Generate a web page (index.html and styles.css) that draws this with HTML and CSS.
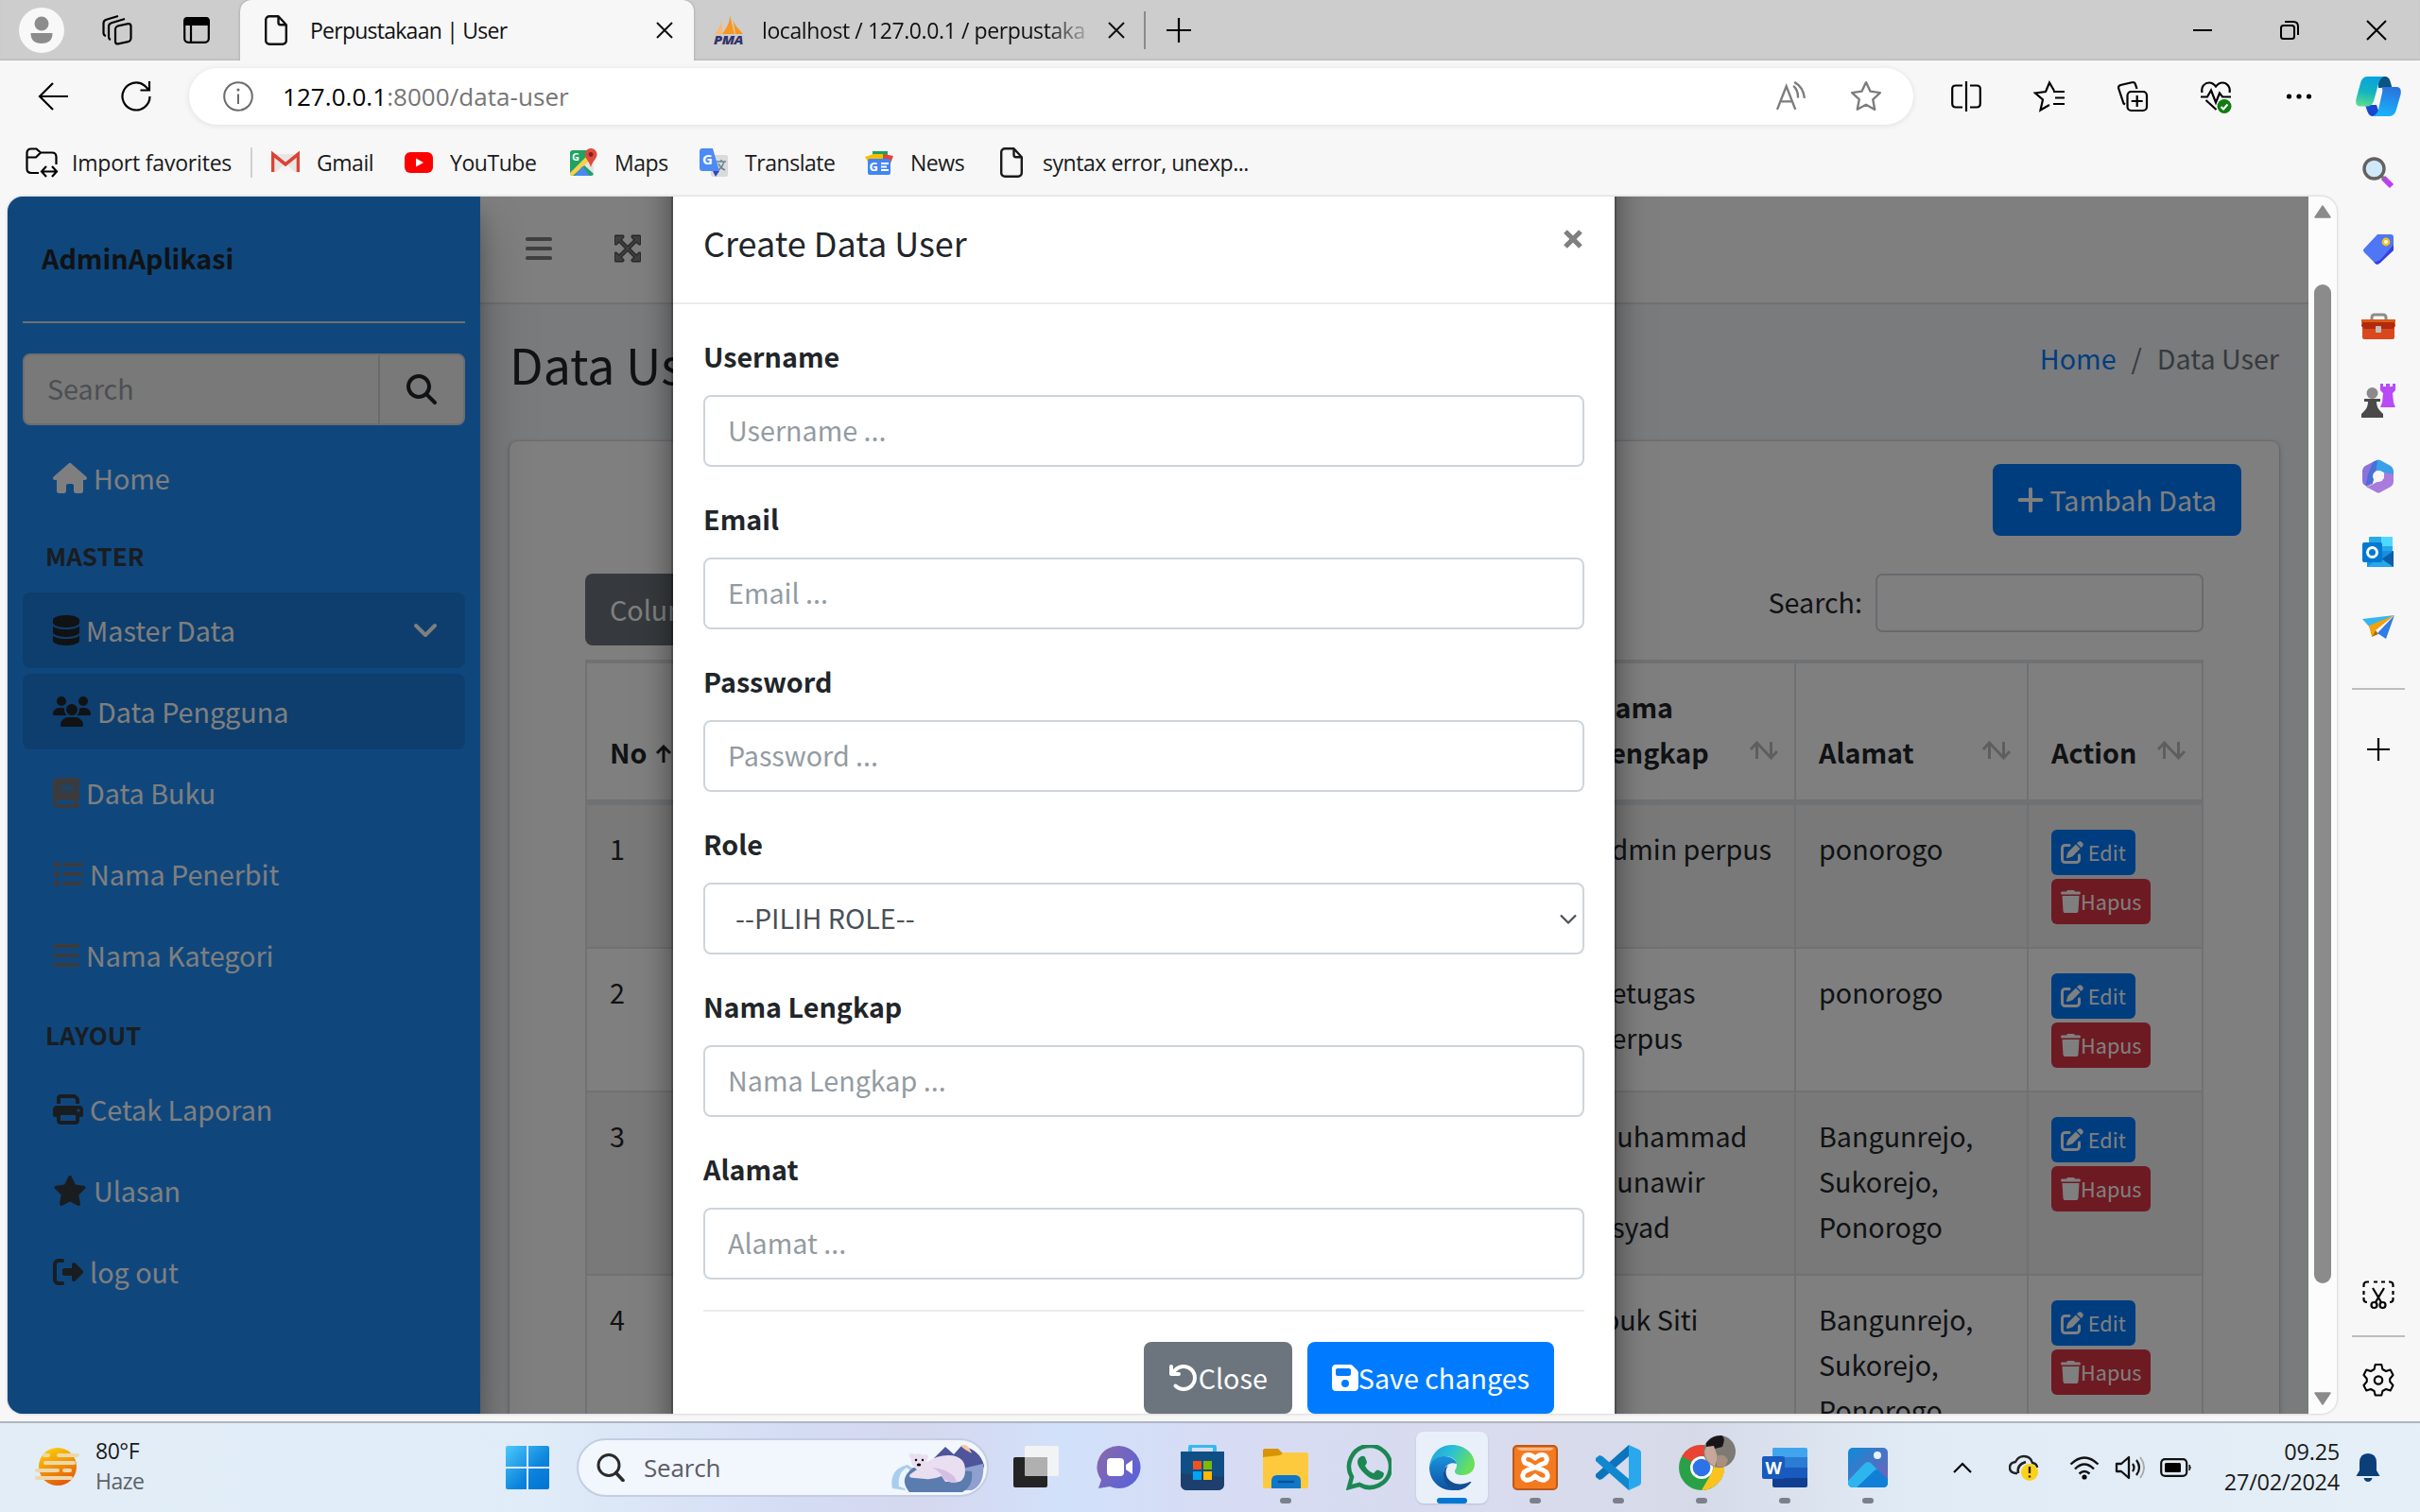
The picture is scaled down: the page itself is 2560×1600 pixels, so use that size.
FILE: index.html
```html
<!DOCTYPE html>
<html lang="id">
<head>
<meta charset="utf-8">
<title>Perpustakaan | User</title>
<link rel="stylesheet" href="styles.css">
</head>
<body>
<svg class="sprite" width="0" height="0" aria-hidden="true">
  <symbol id="house" viewBox="0 0 576 512"><path d="M575.8 255.5c0 18-15 32.1-32 32.1h-32l.7 160.2c0 2.7-.2 5.4-.5 8.1V472c0 22.1-17.9 40-40 40H392c-22.1 0-40-17.9-40-40V384c0-17.7-14.3-32-32-32H256c-17.7 0-32 14.3-32 32v88c0 22.1-17.9 40-40 40H104c-22.1 0-40-17.9-40-40V360c0-.9 0-1.9 .1-2.8V287.6H32c-18 0-32-14-32-32.1c0-9 3-17 10-24L266.4 8c7-7 15-8 22-8s15 2 21 7L564.8 231.5c8 7 12 15 11 24z"/></symbol>
  <symbol id="search" viewBox="0 0 512 512"><path d="M416 208c0 45.9-14.9 88.3-40 122.7L502.6 457.4c12.5 12.5 12.5 32.8 0 45.3s-32.8 12.5-45.3 0L330.7 376c-34.4 25.2-76.8 40-122.7 40C93.1 416 0 322.9 0 208S93.1 0 208 0S416 93.1 416 208zM208 352a144 144 0 1 0 0-288 144 144 0 1 0 0 288z"/></symbol>
  <symbol id="database" viewBox="0 0 448 512"><path d="M448 80v48c0 44.2-100.3 80-224 80S0 172.2 0 128V80C0 35.8 100.3 0 224 0S448 35.8 448 80zM393.2 214.7c20.8-7.4 39.9-16.9 54.8-28.6V288c0 44.2-100.3 80-224 80S0 332.2 0 288V186.1c14.9 11.8 34 21.2 54.8 28.6C99.7 230.7 159.5 240 224 240s124.3-9.3 169.2-25.3zM0 346.1c14.9 11.8 34 21.2 54.8 28.6C99.7 390.7 159.5 400 224 400s124.3-9.3 169.2-25.3c20.8-7.4 39.9-16.9 54.8-28.6V432c0 44.2-100.3 80-224 80S0 476.2 0 432V346.1z"/></symbol>
  <symbol id="users" viewBox="0 0 640 512"><path d="M144 0a80 80 0 1 1 0 160A80 80 0 1 1 144 0zM512 0a80 80 0 1 1 0 160A80 80 0 1 1 512 0zM0 298.7C0 239.8 47.8 192 106.7 192h42.7c15.9 0 31 3.5 44.6 9.7c-1.3 7.2-1.9 14.7-1.9 22.3c0 38.2 16.8 72.5 43.3 96H21.3C9.6 320 0 310.4 0 298.7zM405.3 320c26-23.500 42.600-57.800 42.600-96c0-7.600-.7-15-1.900-22.300c13.600-6.300 28.700-9.700 44.600-9.700h42.700C592.200 192 640 239.800 640 298.700c0 11.800-9.600 21.300-21.300 21.300H405.300zM224 224a96 96 0 1 1 192 0 96 96 0 1 1 -192 0zM128 485.300C128 411.700 187.700 352 261.300 352H378.700C452.300 352 512 411.700 512 485.300c0 14.700-11.900 26.700-26.700 26.700H154.700c-14.700 0-26.700-11.900-26.700-26.700z"/></symbol>
  <symbol id="book" viewBox="0 0 448 512"><path d="M96 0C43 0 0 43 0 96V416c0 53 43 96 96 96H416c17.700 0 32-14.300 32-32s-14.300-32-32-32V384c17.700 0 32-14.300 32-32V32c0-17.700-14.300-32-32-32H96zm0 384H352v64H96c-17.700 0-32-14.300-32-32s14.300-32 32-32zm32-240c0-8.800 7.200-16 16-16H336c8.800 0 16 7.200 16 16s-7.200 16-16 16H144c-8.800 0-16-7.200-16-16zm16 48H336c8.800 0 16 7.200 16 16s-7.200 16-16 16H144c-8.800 0-16-7.200-16-16s7.200-16 16-16z"/></symbol>
  <symbol id="list" viewBox="0 0 512 512"><rect x="16" y="48" width="96" height="96" rx="24"/><rect x="16" y="208" width="96" height="96" rx="24"/><rect x="16" y="368" width="96" height="96" rx="24"/><rect x="160" y="64" width="352" height="64" rx="32"/><rect x="160" y="224" width="352" height="64" rx="32"/><rect x="160" y="384" width="352" height="64" rx="32"/></symbol>
  <symbol id="bars" viewBox="0 0 448 512"><rect y="64" width="448" height="64" rx="30"/><rect y="224" width="448" height="64" rx="30"/><rect y="384" width="448" height="64" rx="30"/></symbol>
  <symbol id="print" viewBox="0 0 512 512"><path d="M128 0C92.700 0 64 28.700 64 64v96h64V64H354.700L384 93.300V160h64V93.300c0-17-6.700-33.300-18.700-45.300L400 18.700C388 6.700 371.700 0 354.700 0H128zM384 352v96H128V352H384zm64 32h32c17.700 0 32-14.300 32-32V256c0-35.300-28.700-64-64-64H64c-35.300 0-64 28.700-64 64v96c0 17.700 14.300 32 32 32H64v64c0 35.300 28.700 64 64 64H384c35.300 0 64-28.700 64-64V384zM432 248a24 24 0 1 1 0 48 24 24 0 1 1 0-48z"/></symbol>
  <symbol id="star" viewBox="0 0 576 512"><path d="M316.900 18C311.600 7 300.400 0 288.100 0s-23.400 7-28.800 18L195 150.300 51.400 171.500c-12 1.800-22 10.200-25.700 21.700s-.7 24.200 7.900 32.700L137.800 329 113.200 474.700c-2 12 3 24.200 12.900 31.300s23 8 33.800 2.300l128.300-68.500 128.300 68.500c10.800 5.700 23.900 4.900 33.800-2.300s14.900-19.300 12.900-31.300L438.500 329 542.700 225.900c8.600-8.500 11.700-21.200 7.900-32.700s-13.700-19.900-25.700-21.700L381.200 150.300 316.900 18z"/></symbol>
  <symbol id="logout" viewBox="0 0 512 512"><path d="M377.900 105.900L500.700 228.700c7.200 7.200 11.300 17.100 11.300 27.300s-4.100 20.100-11.300 27.300L377.900 406.100c-6.400 6.400-15 9.900-24 9.900c-18.700 0-33.900-15.200-33.900-33.900V320H192c-17.700 0-32-14.300-32-32V224c0-17.700 14.300-32 32-32H320V129.900c0-18.700 15.200-33.900 33.900-33.900c9 0 17.600 3.600 24 9.900zM160 96H96c-17.700 0-32 14.300-32 32V384c0 17.700 14.300 32 32 32h64c17.700 0 32 14.300 32 32s-14.300 32-32 32H96c-53 0-96-43-96-96V128C0 75 43 32 96 32h64c17.700 0 32 14.300 32 32s-14.300 32-32 32z"/></symbol>
  <symbol id="expand" viewBox="0 0 448 512"><path d="M448 344v112a23.940 23.940 0 0 1-24 24H312c-21.390 0-32.090-25.900-17-41l36.200-36.200L224 295.600 116.770 402.900 153 439c15.090 15.100 4.390 41-17 41H24a23.940 23.940 0 0 1-24-24V344c0-21.400 25.890-32.100 41-17l36.190 36.200L184.460 256 77.180 148.700 41 185c-15.100 15.100-41 4.400-41-17V56a23.940 23.940 0 0 1 24-24h112c21.390 0 32.090 25.900 17 41l-36.200 36.200L224 216.400l107.230-107.300L295 73c-15.090-15.100-4.390-41 17-41h112a23.940 23.940 0 0 1 24 24v112c0 21.400-25.890 32.100-41 17l-36.190-36.200L263.540 256l107.280 107.300L407 327.100c15.100-15.200 41-4.500 41 16.900z" stroke="currentColor" stroke-width="22"/></symbol>
  <symbol id="edit" viewBox="0 0 512 512"><path d="M471.600 21.700c-21.900-21.900-57.300-21.900-79.200 0L362.300 51.700l97.900 97.900 30.100-30.100c21.900-21.900 21.900-57.300 0-79.200L471.600 21.700zm-299.200 220c-6.100 6.100-10.800 13.600-13.500 21.900l-29.600 88.800c-2.900 8.600-.6 18.100 5.800 24.600s15.900 8.700 24.600 5.800l88.800-29.600c8.200-2.700 15.700-7.400 21.900-13.500L437.700 172.300 339.700 74.300 172.400 241.700zM96 64C43 64 0 107 0 160V416c0 53 43 96 96 96H352c53 0 96-43 96-96V320c0-17.700-14.300-32-32-32s-32 14.300-32 32v96c0 17.700-14.300 32-32 32H96c-17.700 0-32-14.300-32-32V160c0-17.700 14.300-32 32-32h96c17.700 0 32-14.300 32-32s-14.300-32-32-32H96z"/></symbol>
  <symbol id="trash" viewBox="0 0 448 512"><path d="M135.200 17.700L128 32H32C14.300 32 0 46.300 0 64S14.300 96 32 96H416c17.700 0 32-14.300 32-32s-14.300-32-32-32H320l-7.200-14.300C307.400 6.800 296.300 0 284.200 0H163.800c-12.100 0-23.200 6.800-28.600 17.700zM416 128H32L53.200 467c1.600 25.300 22.600 45 47.900 45H346.900c25.300 0 46.300-19.700 47.900-45L416 128z"/></symbol>
  <symbol id="save" viewBox="0 0 448 512"><path d="M64 32C28.700 32 0 60.700 0 96V416c0 35.300 28.700 64 64 64H384c35.300 0 64-28.700 64-64V173.300c0-17-6.700-33.300-18.700-45.300L352 50.700C340 38.700 323.700 32 306.700 32H64zm0 96c0-17.700 14.300-32 32-32H288c17.700 0 32 14.300 32 32v64c0 17.700-14.300 32-32 32H96c-17.700 0-32-14.300-32-32V128zM224 288a64 64 0 1 1 0 128 64 64 0 1 1 0-128z"/></symbol>
  <symbol id="undo" viewBox="0 0 512 512"><path d="M125.700 160H176c17.700 0 32 14.300 32 32s-14.300 32-32 32H48c-17.700 0-32-14.300-32-32V64c0-17.700 14.300-32 32-32s32 14.300 32 32v51.200L97.600 97.600c87.500-87.500 229.300-87.500 316.800 0s87.500 229.300 0 316.800s-229.300 87.500-316.800 0c-12.500-12.500-12.500-32.800 0-45.300s32.800-12.500 45.300 0c62.500 62.500 163.800 62.500 226.300 0s62.500-163.800 0-226.300s-163.800-62.500-226.300 0L125.700 160z"/></symbol>
  <symbol id="plus" viewBox="0 0 448 512"><path d="M224 74v364M42 256h364" fill="none" stroke="currentColor" stroke-width="64" stroke-linecap="round"/></symbol>
  <symbol id="sort" viewBox="0 0 32 20"><path d="M8.500 19V2M2 9l6.500-7L15 9l3 3M23.500 1v17M17 11l6.500 7 6.500-7" fill="none" stroke="currentColor" stroke-width="3"/></symbol>
  <symbol id="page" viewBox="0 0 24 32"><path d="M5 1.200h9.500l8.300 9V27a3.800 3.800 0 0 1-3.800 3.800H5A3.800 3.800 0 0 1 1.200 27V5A3.800 3.800 0 0 1 5 1.200zM14.500 1.200V8a2.200 2.200 0 0 0 2.200 2.200h6" fill="none" stroke="currentColor" stroke-width="2.400" stroke-linejoin="round"/></symbol>
  <symbol id="x" viewBox="0 0 18 18"><path d="M1 1l16 16M17 1L1 17" fill="none" stroke="currentColor" stroke-width="2"/></symbol>
</svg>

<header class="tabstrip">
  <div class="profile"><svg viewBox="0 0 48 48"><circle cx="24" cy="17" r="7.500" fill="#8c8c8c"/><path d="M12.500 27h23c0 7-3.500 11-11.500 11s-11.500-4-11.500-11z" fill="#8c8c8c"/></svg></div>
  <svg class="ts-work line" viewBox="0 0 32 32"><rect x="14" y="11" width="16.500" height="19" rx="3" transform="skewY(-12) translate(0 4)"/><path d="M9 26c-1.500-.5-2-1.500-2-3V12c0-2 1-3 3-3.700L24 4M4 22c-1.500-.5-2.500-1.500-2.500-3V8.500c0-2 1-3 3-3.700L17 1"/></svg>
  <svg class="ts-actions line" viewBox="0 0 28 28"><rect x="1.200" y="1.200" width="25.600" height="25.600" rx="4"/><path d="M1.200 8V4q0-2.800 2.800-2.800h20q2.800 0 2.800 2.800v4z" fill="#000"/><path d="M8 8v19"/></svg>
  <div class="tab active"><svg class="tab-icon"><use href="#page"/></svg><span class="tab-title">Perpustakaan | User</span><svg class="tab-x"><use href="#x"/></svg></div>
  <div class="tab second">
    <svg class="pma" viewBox="0 0 32 32"><path d="M1 20C5 15 8 10 8 4l1 16z" fill="#fdb768"/><path d="M9 20C14 13 17 8 17 0l5 20z" fill="#f8971d"/><path d="M20 3c1 7 6 11 11 17h-8z" fill="#f8971d"/><text x="0" y="31" textLength="31" lengthAdjust="spacingAndGlyphs" font-family="Open Sans" font-weight="800" font-style="italic" font-size="12" fill="#33336a">PMA</text></svg>
    <span class="tab-title fade">localhost / 127.0.0.1 / perpustaka</span><svg class="tab-x"><use href="#x"/></svg></div>
  <span class="tab-sep"></span>
  <svg class="tab-plus line" viewBox="0 0 28 28"><path d="M14 1v26M1 14h26"/></svg>
  <div class="win-ctl">
    <svg class="line" viewBox="0 0 20 20"><path d="M0 10h20"/></svg>
    <svg class="line" viewBox="0 0 20 20"><rect x="1" y="5" width="14" height="14" rx="2.500"/><path d="M5 1h9q5 0 5 5v9"/></svg>
    <svg class="line" viewBox="0 0 20 20"><path d="M0 0l20 20M20 0L0 20"/></svg>
  </div>
</header>

<section class="toolbar">
  <svg class="back line" viewBox="0 0 32 32"><path d="M32 16H2M16 2L2 16l14 14"/></svg>
  <svg class="reload line" viewBox="0 0 32 32"><path d="M30.500 16A14.500 14.500 0 1 1 25 4.600L29.500 9M30 0v9.500h-9.500"/></svg>
  <div class="address">
    <svg class="info" viewBox="0 0 32 32"><circle cx="16" cy="16" r="14.800" fill="none" stroke="#6b6b6b" stroke-width="2"/><path d="M16 13.500V24" stroke="#6b6b6b" stroke-width="2"/><circle cx="16" cy="9" r="1.600" fill="#6b6b6b"/></svg>
    <span class="url">127.0.0.1<span class="dim">:8000/data-user</span></span>
    <svg class="aloud" viewBox="0 0 30 30"><path d="M1 28L10 5l9 23M4 20h12M17 4.500q5 4.500 4.500 12M18 .8q9 5 10 16" fill="none" stroke="#7c7c7c" stroke-width="2.200"/></svg>
    <svg class="fav" viewBox="0 0 32 32"><path d="M16 2l4.300 9 9.700 1.300-7.200 6.800 1.900 10L16 24.300 7.300 29l1.900-10L2 12.300 11.700 11z" fill="none" stroke="#7c7c7c" stroke-width="2.200" stroke-linejoin="round"/></svg>
  </div>
  <div class="tools">
    <svg class="line" viewBox="0 0 32 32"><path d="M16 0v32M12 4.500H5Q1.200 4.500 1.200 8v15.500q0 4 3.800 4h7M20 4.500h7q3.800 0 3.800 3.500v15.500q0 4-3.800 4h-7"/></svg>
    <svg class="line" viewBox="0 0 32 32"><path d="M20 11h12M22 17.500h10M20 24h12M21 10l-5-8.500-4 9.500-11 1.500 8 7-2.500 11L16 25"/></svg>
    <svg class="line" viewBox="0 0 32 32"><rect x="10.500" y="11" width="20.500" height="20" rx="4"/><path d="M20.700 15v12M14.700 21h12M8 24.500l-1.500-1L1.300 8q-1-3 2-4L15 1.300q3-1 4 2L20.500 8"/></svg>
    <svg class="line" viewBox="0 0 32 32"><path d="M1.500 12C0 5 5 1.500 9 1.500c3 0 5 1.500 7 4 2-2.500 4-4 7-4 4 0 9 4 7.500 10.500M0 16.500h7l4-7 5 13 4-10 3 4h9M5.500 20l11 10"/><circle cx="25" cy="26.500" r="7.500" fill="#107c10" stroke="none"/><path d="M21.500 27l2.500 2.500 4.500-5" stroke="#fff"/></svg>
    <svg viewBox="0 0 32 32"><circle cx="5.500" cy="16" r="2.600"/><circle cx="16" cy="16" r="2.600"/><circle cx="26.500" cy="16" r="2.600"/></svg>
  </div>
</section>

<nav class="favorites">
  <div class="fv import"><svg class="line" viewBox="0 0 34 32"><path d="M14 27H6q-4.500 0-4.500-4.500V6Q1.500 1.500 6 1.500h5.500L16 5.500h12q4.500 0 4.500 4.500v8M1.500 10.500H11L16 5.500M22 20l-5 5.500 5 5.500M28 20l5 5.500-5 5.500M17 25.500h16"/></svg>Import favorites</div>
  <div class="fv gmail"><svg viewBox="0 0 30 30"><path d="M3 6h24v19H3z" fill="#e9e5e3"/><path d="M5 25l10-9 10 9z" fill="#f7f5f4"/><path d="M1.500 25V6L15 17 28.500 6v19" fill="none" stroke="#da4437" stroke-width="3.600"/></svg>Gmail</div>
  <div class="fv yt"><svg viewBox="0 0 30 30"><rect y="4" width="30" height="22" rx="6" fill="#f00"/><path d="M12 10.500l8 4.500-8 4.500z" fill="#fff"/></svg>YouTube</div>
  <div class="fv maps"><svg viewBox="0 0 30 30"><rect x="1" y="2" width="25" height="27" rx="3" fill="#1ea362"/><path d="M26 5v22L14 16z" fill="#e3e3e3"/><path d="M1 26L21 6l4 4L4 29q-3 0-3-3z" fill="#fbd04b"/><path d="M6 29l8-10 8 10z" fill="#4a89f3"/><text x="3" y="13" font-size="11" font-weight="700" font-family="Open Sans" fill="#fff">G</text><path d="M23 0c4 0 6.500 3 6.500 6.500C29.500 11 25 13 23 20c-2-7-6-9-6-13.500C17 3 19 0 23 0z" fill="#de4a3c"/><circle cx="23" cy="6.500" r="2.400" fill="#7c231c"/></svg>Maps</div>
  <div class="fv trans"><svg viewBox="0 0 30 30"><rect x="12" y="7" width="18" height="23" rx="2" fill="#dadada"/><path d="M3 0h11l7 24H3q-3 0-3-3V3q0-3 3-3z" fill="#4c8bf5"/><path d="M14 24h7l-4 6z" fill="#3544b8"/><text x="3" y="17" font-size="15" font-weight="700" font-family="Open Sans" fill="#fff">G</text><path d="M18 14h10M23 12v2M26 14q-2 6-6 9M20 16q2 5 7 7" fill="none" stroke="#6b8893" stroke-width="1.600"/></svg>Translate</div>
  <div class="fv news"><svg viewBox="0 0 30 30"><path d="M8 3h16v8H8z" fill="#1ca15d"/><path d="M0 9l9-3 3 8H3z" fill="#fbbc04"/><path d="M20 6l10 2-3 8h-8z" fill="#ea4335"/><path d="M9 6h10v7H8z" fill="#fbbc04"/><rect x="3" y="11" width="24" height="17" rx="2" fill="#4285f4"/><text x="4.500" y="24" font-size="13" font-weight="700" font-family="Open Sans" fill="#fff">G</text><path d="M17 16h8M17 19.500h6M17 23h8" stroke="#fff" stroke-width="2"/></svg>News</div>
  <div class="fv pg"><svg><use href="#page"/></svg>syntax error, unexp...</div>
</nav>

<div class="middle">
<main class="viewport">
  <div class="app">
    <aside class="sidebar">
      <div class="brand">AdminAplikasi</div>
      <div class="side-search"><span>Search</span><i><svg><use href="#search"/></svg></i></div>
      <a class="item home"><svg class="w36 white"><use href="#house"/></svg>Home</a>
      <div class="head">MASTER</div>
      <a class="item on"><svg class="w28"><use href="#database"/></svg>Master Data<svg class="chev" viewBox="0 0 26 16"><path d="M3 3l10 10L23 3" fill="none" stroke="#fff" stroke-width="4" stroke-linecap="round" stroke-linejoin="round"/></svg></a>
      <a class="item on"><svg class="w40"><use href="#users"/></svg>Data Pengguna</a>
      <a class="item"><svg class="w28 grey"><use href="#book"/></svg>Data Buku</a>
      <a class="item"><svg class="w32 grey"><use href="#list"/></svg>Nama Penerbit</a>
      <a class="item"><svg class="w28 grey"><use href="#bars"/></svg>Nama Kategori</a>
      <div class="head layout">LAYOUT</div>
      <a class="item"><svg class="w32 ink"><use href="#print"/></svg>Cetak Laporan</a>
      <a class="item"><svg class="w36 ink"><use href="#star"/></svg>Ulasan</a>
      <a class="item"><svg class="w32 ink"><use href="#logout"/></svg>log out</a>
    </aside>
    <section class="content">
      <div class="navbar"><svg class="w28"><use href="#bars"/></svg><svg class="w28"><use href="#expand"/></svg></div>
      <div class="page-head"><h1>Data User</h1><div class="crumbs"><a>Home</a><b>/</b><span>Data User</span></div></div>
      <div class="card">
        <div class="card-top"><span class="btn primary add"><svg class="w28"><use href="#plus"/></svg>Tambah Data</span></div>
        <div class="filters"><span class="btn secondary">Column</span><label>Search:<span class="box"></span></label></div>
        <table>
          <colgroup><col class="c-no"><col class="c-mid"><col class="c-name"><col class="c-addr"><col class="c-act"></colgroup>
          <thead><tr><th>No <svg class="up" viewBox="0 0 20 20"><path d="M9 19V2M2 9l7-7 7 7" fill="none" stroke="currentColor" stroke-width="3"/></svg></th><th></th><th><div class="th">Nama Lengkap<svg><use href="#sort"/></svg></div></th><th><div class="th">Alamat<svg><use href="#sort"/></svg></div></th><th><div class="th">Action<svg><use href="#sort"/></svg></div></th></tr></thead>
          <tbody>
            <tr class="r2"><td>1</td><td></td><td>Admin perpus</td><td>ponorogo</td><td><div class="acts"><span class="sm primary"><svg><use href="#edit"/></svg>&nbsp;Edit</span><span class="sm danger"><svg class="tr"><use href="#trash"/></svg>Hapus</span></div></td></tr>
            <tr class="r2"><td>2</td><td></td><td>Petugas<br>Perpus</td><td>ponorogo</td><td><div class="acts"><span class="sm primary"><svg><use href="#edit"/></svg>&nbsp;Edit</span><span class="sm danger"><svg class="tr"><use href="#trash"/></svg>Hapus</span></div></td></tr>
            <tr class="r3"><td>3</td><td></td><td>Muhammad<br>Munawir<br>Asyad</td><td>Bangunrejo,<br>Sukorejo,<br>Ponorogo</td><td><div class="acts"><span class="sm primary"><svg><use href="#edit"/></svg>&nbsp;Edit</span><span class="sm danger"><svg class="tr"><use href="#trash"/></svg>Hapus</span></div></td></tr>
            <tr class="r3"><td>4</td><td></td><td>Ibuk Siti</td><td>Bangunrejo,<br>Sukorejo,<br>Ponorogo</td><td><div class="acts"><span class="sm primary"><svg><use href="#edit"/></svg>&nbsp;Edit</span><span class="sm danger"><svg class="tr"><use href="#trash"/></svg>Hapus</span></div></td></tr>
          </tbody>
        </table>
      </div>
    </section>
    <div class="backdrop"></div>
    <div class="modal">
      <div class="modal-head"><h2>Create Data User</h2><svg class="close" viewBox="0 0 22 22"><path d="M3 3l16 16M19 3L3 19" stroke="#7f7f7f" stroke-width="5.200"/></svg></div>
      <div class="modal-body">
        <div class="field"><label>Username</label><div class="ctl">Username ...</div></div>
        <div class="field"><label>Email</label><div class="ctl">Email ...</div></div>
        <div class="field"><label>Password</label><div class="ctl">Password ...</div></div>
        <div class="field"><label>Role</label><div class="ctl select">--PILIH ROLE--<svg viewBox="0 0 18 12"><path d="M1 1.500l8 8 8-8" fill="none" stroke="#495057" stroke-width="2.200"/></svg></div></div>
        <div class="field"><label>Nama Lengkap</label><div class="ctl">Nama Lengkap ...</div></div>
        <div class="field"><label>Alamat</label><div class="ctl">Alamat ...</div></div>
        <div class="modal-foot"><span class="btn secondary"><svg class="w32"><use href="#undo"/></svg>Close</span><span class="btn primary"><svg class="w28"><use href="#save"/></svg>Save changes</span></div>
      </div>
    </div>
  </div>
  <div class="scroll"><svg viewBox="0 0 18 14"><path d="M9 1l8 12H1z" fill="#8b8b8b" stroke="#8b8b8b" stroke-width="1.500" stroke-linejoin="round"/></svg><i></i><svg viewBox="0 0 18 14"><path d="M9 13L1 1h16z" fill="#8b8b8b" stroke="#8b8b8b" stroke-width="1.500" stroke-linejoin="round"/></svg></div>
</main>
<aside class="edgebar">
  <svg class="copilot" viewBox="0 0 48 44">
    <defs><linearGradient id="ca" x1=".4" y1="0" x2=".2" y2="1"><stop offset="0" stop-color="#0aa2dc"/><stop offset=".5" stop-color="#12b5c0"/><stop offset="1" stop-color="#5fdc8c"/></linearGradient><linearGradient id="cb" x1=".6" y1="0" x2=".4" y2="1"><stop offset="0" stop-color="#2a72dd"/><stop offset="1" stop-color="#19b4fb"/></linearGradient></defs>
    <path d="M24 1h7q4 0 5.500 5l2 7H24z" fill="#0b5380"/><path d="M10 31h12l4 12h-8q-4 0-6-6z" fill="#1747d1"/>
    <path d="M12 1h18q-4 1-6 8l-5 18q-2 5.500-7 5.500H5q-6 0-4.500-8L5 8q2-7 7-7z" fill="url(#ca)"/><path d="M30 12h13q6 0 4.500 8L43 36q-2 7-7 7H18q5-2 6-7l4-18q1-4-1-6z" fill="url(#cb)"/></svg>
  <svg class="e1" viewBox="0 0 34 34"><path d="M22 22l9 9" stroke="#c03cf5" stroke-width="6"/><path d="M19 19l5 5" stroke="#777" stroke-width="3"/><circle cx="12.500" cy="12.500" r="10.500" fill="#cfe8fa" stroke="#66615f" stroke-width="3.400"/></svg>
  <svg class="e2" viewBox="0 0 34 34"><path d="M16 1h14q3 0 3 3v12L19 31q-3 3-5 1L2 20q-2-2 0-4z" fill="#4f76f7"/><path d="M33 12v6L19 31q-3 3-5 1L12 30q4 1 8-3z" fill="#3a3ee0"/><circle cx="25" cy="9" r="3.200" fill="#fff" stroke="#f2c40f" stroke-width="2.400"/></svg>
  <svg class="e3" viewBox="0 0 36 28"><path d="M11 8V5q0-3 3-3h9q3 0 3 3v3" fill="none" stroke="#8c8c8c" stroke-width="3"/><rect x="1" y="12" width="34" height="16" rx="2" fill="#d9481c"/><path d="M1 7h34l1 7-3 3H3l-3-3z" fill="#b02a0c"/><path d="M0 7h36v3H0z" fill="#dc5a14"/><rect x="15" y="14" width="6" height="7" rx="1" fill="#bfbfbf"/></svg>
  <svg class="e4" viewBox="0 0 36 36"><path d="M20 0h3v3h3V0h4v3h3V0h3v7l-3 3 1 10 2 5H20l2-5 1-10-3-3z" fill="#b84bf6"/><circle cx="11.500" cy="10" r="6" fill="#8a8a8a"/><path d="M3 16h17v3h-4q0 6 4 10l3 3v4H0v-4l3-3q4-4 4-10H3z" fill="#4a4a4a"/></svg>
  <svg class="e5" viewBox="0 0 34 36"><path d="M11 3l4-2q2-1 4 0l11 6q3 2 3 5v8L21 13q-4-2-8 0l-2 2z" fill="#3a9fe9"/><path d="M11 3v23l-6 3-3-2q-2-1-2-5V12q0-3 3-5z" fill="#8a74dc"/><path d="M11 3l5-2-2 14-3 10-8 3q2-6 3-12z" fill="#4a6fd8"/><path d="M33 16v8q0 3-3 5l-11 6q-2 1-4 0L4 29q3 0 6-2l13-7V14z" fill="#a87bdd"/><circle cx="17" cy="18" r="6" fill="#f7f7f7"/></svg>
  <svg class="e6" viewBox="0 0 34 34"><rect x="7" y="1" width="25" height="16" rx="1" fill="#28a8ea"/><path d="M20 1h12v10H20z" fill="#50d9ff"/><path d="M5 16h28v17H5z" fill="#1490df"/><path d="M33 16v17L20 25z" fill="#0a5fa8"/><path d="M5 33h28L18 23z" fill="#28a8ea"/><rect y="7" width="21" height="21" rx="2" fill="#0078d4"/><circle cx="10.500" cy="17.500" r="5" fill="none" stroke="#fff" stroke-width="3"/></svg>
  <svg class="e7" viewBox="0 0 34 26"><path d="M0 5L34 1 8 14z" fill="#35b6f0"/><path d="M34 1L25 26l-9-6z" fill="#2f7de8"/><path d="M34 1L7 12l3 12 4-7z" fill="#f2a20c"/><path d="M14 17l-4 7 7-3z" fill="#b26a05"/></svg>
  <hr>
  <svg class="e8 line" viewBox="0 0 24 24"><path d="M12 0v24M0 12h24"/></svg>
  <span class="grow"></span>
  <svg class="e9 line" viewBox="0 0 34 30"><path d="M1.500 7V5q0-3.500 3.500-3.500h2M12 1.500h4M20 1.500h4M28 1.500h1q3.500 0 3.500 3.500v2M1.500 11v4M32.500 11v4M1.500 18v2q0 3 3.500 3M32.500 18v2q0 3-3.500 3M11 8l9 15M23 8l-9 15"/><circle cx="12.500" cy="26" r="3"/><circle cx="21.500" cy="26" r="3"/></svg>
  <hr>
  <svg class="e10 line" viewBox="0 0 34 36"><path d="M13.500 2h7l1.200 5 3.800 2 5-1.500 3 5.500-3.500 4v3l3.500 4-3 5.500-5-1.500-3.800 2-1.200 4.500h-7L12.300 30l-3.800-2-5 1.500-3-5.500L4 20v-3L.5 13l3-5.500L8.500 9l3.800-2z" transform="translate(1 0) scale(.94 1)" stroke-linejoin="round"/><circle cx="17" cy="18.500" r="4.200"/></svg>
</aside>
</div>

<footer class="taskbar">
  <div class="weather"><svg viewBox="0 0 48 42"><defs><linearGradient id="sun" x1=".3" y1="0" x2=".7" y2="1"><stop offset="0" stop-color="#fccb06"/><stop offset="1" stop-color="#e3540b"/></linearGradient></defs><circle cx="24" cy="21" r="20" fill="url(#sun)"/><path d="M10 9h4M25 9h20M11 17h30M2 25h22M31 25h6M2 33h36" stroke="#ecd9ab" stroke-width="4" stroke-linecap="round"/></svg><div><b>80°F</b><span>Haze</span></div></div>
  <svg class="start" viewBox="0 0 46 46"><defs><linearGradient id="wg" x1="0" y1="0" x2="1" y2="1"><stop offset="0" stop-color="#4cc9fb"/><stop offset=".6" stop-color="#0b84dc"/><stop offset="1" stop-color="#0072d0"/></linearGradient></defs><path d="M2 0h20v22H0V2q0-2 2-2zM24 0h20q2 0 2 2v20H24zM0 24h22v22H2q-2 0-2-2zM24 24h22v20q0 2-2 2H24z" fill="url(#wg)"/></svg>
  <div class="tsearch"><svg viewBox="0 0 30 30"><circle cx="13" cy="12.500" r="11" fill="none" stroke="#2b2b2b" stroke-width="3"/><path d="M20.500 20.500l7.500 8" stroke="#2b2b2b" stroke-width="3.600" stroke-linecap="round"/></svg><span>Search</span>
    <svg class="bear" viewBox="0 0 100 50"><path d="M46 14l12-12 9 8 8-9q20 4 24 21l-4 14H48z" fill="#4e559b"/><path d="M74 1q5-3 9 2l3 6-7-4z" fill="#f7c9a0"/><path d="M72 26l26-6q2 22-12 28H60z" fill="#8e9fd0"/><path d="M2 46Q-2 26 18 21l6 4q-14 10-8 23z" fill="#a9cdec"/><path d="M9 44q-2-14 8-20l4 3q-8 8-4 20z" fill="#e9f4fc"/><path d="M20 50q-12-14 4-26l62 4q2 16-10 22z" fill="#5a7cae"/><path d="M20 10q2-3 5 0 6-2 10 1 3-3 5 1 0 3-2 4l1 2q10-7 22-7 18 0 18 16 0 9-6 12H58l-4-6q-9 4-17 3l-12-1q-7 0-4-4l7-5q-7-5-6-11-3-2-2-5z" fill="#eadff0"/><path d="M44 24q10 5 12 12l8 4h7l-4-7q-9-8-23-9z" fill="#d3bfe2"/><circle cx="27" cy="16" r="1.200"/><circle cx="34" cy="16" r="1.200"/><ellipse cx="30" cy="21" rx="2.200" ry="1.600"/></svg></div>
  <div class="apps">
    <i><svg viewBox="0 0 48 48"><rect y="13" width="36" height="32" rx="2" fill="#242424"/><rect x="12" y="1" width="36" height="32" rx="2" fill="#f3f3f3" fill-opacity=".95"/><path d="M12 13h24v20H14q-2 0-2-2z" fill="#b0b0b0"/></svg></i>
    <i><svg viewBox="0 0 48 48"><defs><linearGradient id="ch" x1="0" y1="0" x2="1" y2=".7"><stop offset="0" stop-color="#8c69a8"/><stop offset="1" stop-color="#5b62d8"/></linearGradient></defs><path d="M24 1a23 22.500 0 1 1-10 43L2 46l3-9A23 22.500 0 0 1 24 1z" fill="url(#ch)"/><rect x="11" y="14" width="18" height="19" rx="4" fill="#fff"/><path d="M31 21l7-5v15l-7-5z" fill="#fff"/></svg></i>
    <i><svg viewBox="0 0 48 48"><path d="M11 9V3q0-2 2-2h22q2 0 2 2v6" fill="none" stroke="#35b8f2" stroke-width="4"/><path d="M1 7h46v34q0 7-7 7H8q-7 0-7-7z" fill="#104f86"/><path d="M1 41V30l46 4v7q0 7-7 7H8q-7 0-7-7z" fill="#1d3f6e"/><path d="M14 17h9v9h-9z" fill="#f25022"/><path d="M25 17h9v9h-9z" fill="#7fba00"/><path d="M14 28h9v9h-9z" fill="#00a4ef"/><path d="M25 28h9v9h-9z" fill="#ffb900"/></svg></i>
    <i class="run"><svg viewBox="0 0 48 48"><path d="M0 6q0-2 2-2h14l5 5v6H0z" fill="#d99406"/><path d="M0 13l18-2 4-3h24q2 0 2 2v34q0 2-2 2H2q-2 0-2-2z" fill="#fdca3e"/><path d="M9 46V38q0-6 6-6h19q6 0 6 6v8z" fill="#0f77c8"/><path d="M16 39h17" stroke="#0a4f96" stroke-width="2.400"/></svg></i>
    <i><svg viewBox="0 0 48 48"><path d="M3 45l3-11A22 22 0 1 1 14 42z" fill="none" stroke="#1d8753" stroke-width="4.600"/><path d="M16 12q3-1 4 1l2 5q0 2-2 4 3 6 9 8l3-3q1-1 3 0l4 2q1 1 1 2-1 6-8 6-6 0-13-7-7-7-7-12 0-4 4-6z" fill="#1d8753"/></svg></i>
    <i class="cur"><svg viewBox="0 0 48 48"><defs><linearGradient id="ea" x1="0" y1="0" x2="1" y2=".4"><stop offset="0" stop-color="#1c9fe0"/><stop offset=".5" stop-color="#2bc0d6"/><stop offset="1" stop-color="#68e05c"/></linearGradient><linearGradient id="eb" x1="0" y1="0" x2="0" y2="1"><stop offset="0" stop-color="#1a92de"/><stop offset="1" stop-color="#0d52a0"/></linearGradient></defs><path d="M0 23C2 9 11 0 24 0c14 0 24 10 24 20 0 8-6 12-13 12-6 0-8-2-8-4s2-3 2-7c0-5-5-9-12-9C8 12 2 17 0 23z" fill="url(#ea)"/><path d="M0 24c1-7 8-12 16-12 7 0 12 4 13 8-8-3-14 3-14 11 0 9 7 17 16 16-3 1-5 1-7 1C10 48 0 37 0 24z" fill="url(#eb)"/><path d="M20 22c-4 4-3 12 2 16 6 5 15 4 21 1 1 0 2 0 1 1-3 4-8 7-13 8-9 0-17-7-16-17 0-5 2-8 5-9z" fill="#134f93"/></svg></i>
    <i class="run"><svg viewBox="0 0 48 48"><rect x="1" y="1" width="46" height="46" rx="4" fill="#f47a20" stroke="#b85a1c" stroke-width="2"/><path d="M5 3h38q0 3-5 3H10q-5 0-5-3z" fill="#f9b888"/><path d="M23 24q-5-4-10-5-3-5 1-8 5-2 10 3 5-5 10-3 4 3 1 8-5 1-10 5 7 2 11 5 3 6-2 8-5 1-10-4-5 5-10 4-5-2-2-8 4-3 11-5z" fill="none" stroke="#fff" stroke-width="5" stroke-linejoin="round"/></svg></i>
    <i class="run"><svg viewBox="0 0 48 48"><path d="M35 0l11 5q2 1 2 3v32q0 2-2 3l-11 5z" fill="#29a8ee"/><path d="M35 0v12L7 36l-3 1-4-3v-3z" fill="#0b74bd"/><path d="M35 48V36L7 12l-3-1-4 3v3z" fill="#1187cf"/></svg></i>
    <i class="run"><svg viewBox="0 0 48 48"><circle cx="24" cy="24" r="24" fill="#2aa147"/><path d="M24 0a24 24 0 0 1 21 12H24a12 12 0 0 0-10.500 6L3.200 12A24 24 0 0 1 24 0z" fill="#ea4335"/><path d="M45 12a24 24 0 0 1-21 36l10.400-18A12 12 0 0 0 34 16z" fill="#fcc31e"/><circle cx="24" cy="24" r="12" fill="#fff"/><circle cx="24" cy="24" r="9.300" fill="#2d72e8"/></svg><svg class="ava" viewBox="0 0 34 34"><circle cx="17" cy="17" r="17" fill="#7c7a72"/><path d="M3 8Q9 0 19 0q5 2 1 12l-8 2-9 6z" fill="#171518"/><path d="M3 12l8-1 4 12-3 10Q1 27 1 17z" fill="#c7a79a"/><path d="M14 22q8-4 12 4l-3 7h-9z" fill="#a98f80"/></svg></i>
    <i class="run"><svg viewBox="0 0 48 48"><path d="M12 3h34q2 0 2 2v9H11V5q0-2 1-2z" fill="#41a5ee"/><path d="M11 13h37v11H11z" fill="#2b7cd3"/><path d="M11 24h37v11H11z" fill="#185abd"/><path d="M11 35h37v8q0 2-2 2H13q-2 0-2-2z" fill="#103f91"/><rect y="12" width="24" height="24" rx="2" fill="#185abd"/><text x="3.500" y="30.500" font-family="Open Sans" font-weight="700" font-size="18" fill="#fff">W</text></svg></i>
    <i class="run"><svg viewBox="0 0 48 48"><defs><linearGradient id="ph" x1="0" y1="0" x2="1" y2="1"><stop offset="0" stop-color="#0e8bd8"/><stop offset="1" stop-color="#7a5fb4"/></linearGradient></defs><rect x="3" y="3" width="42" height="42" rx="5" fill="url(#ph)"/><circle cx="34" cy="11" r="4" fill="#e9f3fb"/><path d="M3 38L20 20q4-4 8 0l17 18v2q0 5-5 5H8q-5 0-5-5z" fill="#2cb5ee"/><path d="M12 45l19-18q2-2 4 0l10 9v4q0 5-5 5z" fill="#0f80d6"/></svg></i>
  </div>
  <div class="tray">
    <svg class="t1 line" viewBox="0 0 20 12"><path d="M1 11l9-9 9 9"/></svg>
    <svg class="t2" viewBox="0 0 32 28"><path d="M9 20H7q-6-1-6-6t6-6q3-6 9-6 7 0 9 7 5 1 5 5" fill="none" stroke="#222" stroke-width="2.400"/><path d="M10 20q-2-9 8-12" fill="none" stroke="#222" stroke-width="2.400"/><circle cx="22" cy="19" r="9" fill="#fcd116"/><path d="M22 13v7M22 22.500v2" stroke="#222" stroke-width="2.400"/></svg>
    <svg class="t3" viewBox="0 0 32 26"><path d="M1.500 9.500q14.500-14 29 0M6 14.500q10-10 20 0M10.500 19.500q5.500-5 11 0" fill="none" stroke="#111" stroke-width="2.400"/><circle cx="16" cy="23" r="2.600"/></svg>
    <svg class="t4" viewBox="0 0 32 28"><path d="M2 10h5l8-7v22l-8-7H2z" fill="none" stroke="#111" stroke-width="2.300" stroke-linejoin="round"/><path d="M19 10q3 4 0 8M23 6q6 8 0 16" fill="none" stroke="#111" stroke-width="2.200"/><path d="M27 3q8 11 0 22" fill="none" stroke="#aaa" stroke-width="2"/></svg>
    <svg class="t5" viewBox="0 0 34 20"><rect x="1.200" y="1.200" width="27" height="17.600" rx="4" fill="none" stroke="#111" stroke-width="2.200"/><rect x="5" y="5" width="17" height="10" rx="1.500"/><path d="M31 7q2.500 3 0 6z" stroke="#111"/></svg>
    <div class="clock"><span>09.25</span><span>27/02/2024</span></div>
    <svg class="t6" viewBox="0 0 26 32"><path d="M13 1q9 0 9 10v8l3.500 6H.5L4 19v-8Q4 1 13 1z" fill="#0c3f7a"/><path d="M8.500 27h9q-1 4-4.500 4t-4.500-4z" fill="#0c3f7a"/></svg>
  </div>
</footer>
</body>
</html>
```
FILE: styles.css
```css
* { box-sizing: border-box; }
body { margin: 0; width: 2560px; height: 1600px; overflow: hidden; display: flex; flex-direction: column; background: #f7f7f7; color: #1a1a1a; font: 24px/32px "Open Sans", sans-serif; }
svg { display: block; flex: none; }
.sprite { position: absolute; }
.line { fill: none; stroke: #000; stroke-width: 2.2; overflow: visible; }
i { font-style: normal; }

/* tab strip */
.tabstrip { height: 64px; flex: none; display: flex; align-items: center; background: #cdcdcd; padding-left: 20px; box-shadow: inset 0 -2px 2px -1px #b5b5b5; font-size: 23px; letter-spacing: -.4px; color: #111; }
.profile { width: 48px; height: 48px; border-radius: 50%; background: #f8f8f8; }
.ts-work { width: 32px; height: 32px; margin-left: 40px; }
.ts-actions { width: 28px; height: 28px; margin-left: 54px; }
.tab { display: flex; align-items: center; height: 64px; }
.tab.active { width: 480px; margin-left: 32px; padding: 0 22px 0 26px; background: #f7f7f7; border-radius: 12px 12px 0 0; box-shadow: 0 0 3px #999; clip-path: inset(0 -4px 0 -4px); }
.tab-icon { width: 24px; height: 32px; margin-right: 24px; }
.tab-title { flex: 1; white-space: nowrap; overflow: hidden; }
.active .tab-title { letter-spacing: -.75px; }
.tab-x { width: 18px; height: 18px; }
.tab.second { width: 457px; padding-left: 21px; }
.pma { width: 32px; height: 32px; margin-right: 19px; }
.fade { flex: 0 0 350px; margin-right: 16px; -webkit-mask-image: linear-gradient(90deg, #000 86%, transparent 101%); mask-image: linear-gradient(90deg, #000 86%, transparent 101%); }
.tab-sep { width: 2px; height: 40px; margin-left: 19px; background: #8a8a8a; }
.tab-plus { width: 28px; height: 28px; margin-left: 21px; }
.win-ctl { margin-left: auto; margin-right: 36px; display: flex; gap: 72px; }
.win-ctl svg { width: 20px; height: 20px; stroke-width: 2; }

/* toolbar */
.toolbar { height: 76px; flex: none; display: flex; align-items: center; padding-left: 40px; }
.back, .reload { width: 32px; height: 32px; }
.reload { margin-left: 56px; }
.address { width: 1824px; height: 60px; margin-left: 40px; border-radius: 30px; background: #fff; box-shadow: 0 1px 6px rgba(0,0,0,.1); display: flex; align-items: center; padding: 0 33px 0 36px; }
.info { width: 32px; height: 32px; }
.url { flex: 1; margin-left: 31px; font-size: 26px; letter-spacing: .05px; color: #000; }
.dim { color: #757575; }
.aloud { width: 32px; height: 32px; }
.fav { width: 34px; height: 34px; margin-left: 46px; }
.tools { display: flex; gap: 56px; margin-left: 40px; }
.tools svg { width: 32px; height: 32px; overflow: visible; }

/* favourites */
.favorites { height: 68px; flex: none; display: flex; align-items: center; padding: 0 0 4px 27px; font-size: 23px; letter-spacing: -.45px; }
.fv { display: flex; align-items: center; gap: 18px; height: 32px; white-space: nowrap; }
.fv svg { width: 30px; height: 30px; }
.import { width: 240px; gap: 15px; border-right: 2px solid #d0d0d0; letter-spacing: -.2px; }
.import svg { width: 34px; height: 32px; }
.gmail { width: 161px; padding-left: 20px; }
.yt { width: 174px; }
.maps { width: 138px; }
.trans { width: 175px; }
.news { width: 142px; }
.pg { gap: 20px; }
.pg svg { width: 26px; height: 32px; }

/* page area */
.middle { flex: none; display: flex; height: 1296px; padding-left: 8px; }
.viewport { width: 2464px; height: 1288px; display: flex; background: #fcfcfc; border-radius: 16px; overflow: hidden; box-shadow: 0 0 3px rgba(0,0,0,.25); }
.app { position: relative; width: 2434px; height: 1288px; display: flex; overflow: hidden; font-family: "Noto Sans CJK SC", "Noto Sans", sans-serif; font-size: 28.7px; line-height: 48px; color: #212529; }
.app svg { fill: currentColor; }
.w28 { width: 28px; height: 32px; } .w32 { width: 32px; height: 32px; } .w36 { width: 36px; height: 32px; } .w40 { width: 40px; height: 32px; }
.scroll { width: 30px; display: flex; flex-direction: column; align-items: center; padding: 9px 1px 9px 0; }
.scroll svg { width: 18px; height: 14px; }
.scroll i { width: 18px; height: 1057px; margin: 70px 0 115px; border-radius: 9px; background: #8b8b8b; }

.sidebar { position: relative; z-index: 1; width: 500px; flex: none; background: #1e8efa; padding: 0 16px; color: #fff; box-shadow: 0 28px 56px rgba(0,0,0,.25), 0 20px 20px rgba(0,0,0,.22); }
.brand { height: 134px; padding: 41px 20px 0; font-weight: 700; color: #212529; border-bottom: 2px solid #dfdfdf; }
.side-search { display: flex; height: 76px; margin-top: 32px; background: #f2f2f2; border: 2px solid #dadada; border-radius: 8px; color: #999fa6; line-height: 70px; padding-left: 24px; }
.side-search span { flex: 1; }
.side-search i { width: 90px; border-left: 2px solid #d5d5d5; color: #212529; display: grid; place-items: center; }
.side-search svg { width: 32px; height: 32px; }
.item { display: flex; align-items: center; height: 80px; margin-bottom: 6px; padding: 0 29px 1px 32px; gap: 7px; border-radius: 8px; }
.item svg { color: #212529; }
.item svg.white { color: #fff; }
.item svg.grey { color: #77767a; }
.item svg.ink { color: #343a40; }
.item.on { background: rgba(0,0,0,.12); }
.home { margin-top: 16px; }
.chev { width: 26px; height: 16px; margin-left: auto; }
.item .chev { fill: none; }
.head { height: 73px; padding: 17px 24px 0; margin-bottom: 2px; font-size: 26px; font-weight: 700; line-height: 38px; color: #343a40; }
.head.layout { height: 72px; margin-top: 9px; margin-bottom: 2px; padding-top: 16px; }

.content { flex: 1; background: #f4f6f9; }
.navbar { height: 114px; background: #fff; border-bottom: 2px solid #dee2e6; display: flex; align-items: center; padding: 0 0 2px 48px; gap: 66px; color: rgba(0,0,0,.5); }
.page-head { display: flex; justify-content: space-between; height: 145px; padding: 28px 31px 0 31px; }
h1 { margin: 0; font-size: 51.8px; font-weight: 400; line-height: 70px; }
.crumbs { display: flex; gap: 16px; padding-top: 7px; line-height: 44px; color: #6c757d; }
.crumbs a { color: #007bff; }
.crumbs b { font-weight: 400; }
.card { margin: 0 31px 0 31px; height: 1300px; background: #fff; border-radius: 8px; box-shadow: 0 0 2px rgba(0,0,0,.3), 0 2px 6px rgba(0,0,0,.2); padding: 24px 80px 0; }
.card-top { display: flex; justify-content: flex-end; margin-right: -40px; }
.btn { display: inline-flex; align-items: center; height: 76px; padding: 0 26px 1px; border-radius: 8px; color: #fff; white-space: nowrap; }
.add { gap: 6px; }
.primary { background: #007bff; }
.secondary { background: #6c757d; }
.danger { background: #dc3545; }
.filters { display: flex; justify-content: space-between; align-items: flex-start; margin-top: 40px; height: 91px; }
.filters label { display: flex; gap: 14px; line-height: 60px; }
.box { width: 347px; height: 62px; border: 2px solid #ced4da; border-radius: 7px; }
table { width: 1712px; table-layout: fixed; border-collapse: separate; border-spacing: 0; border-right: 2px solid #dee2e6; border-top: 2px solid #dee2e6; }
.c-no { width: 120px; } .c-mid { width: 922px; } .c-name { width: 237px; } .c-addr { width: 246px; } .c-act { width: 185px; }
th, td { padding: 22px 0 0 24px; border-left: 2px solid #dee2e6; border-top: 2px solid #dee2e6; text-align: left; vertical-align: top; white-space: nowrap; }
th { height: 150px; padding: 0 16px 26px 24px; vertical-align: bottom; border-bottom: 4px solid #dee2e6; white-space: normal; }
.up { display: inline-block; width: 20px; height: 20px; margin-left: 2px; }
.th { display: flex; align-items: flex-end; justify-content: space-between; }
.th svg { width: 32px; height: 20px; margin: 0 0 16px; color: #bcbdbe; }
.r2 { height: 152px; } .r3 { height: 194px; }
tbody tr:nth-child(odd) { background: #f2f2f2; }
.acts { display: flex; flex-direction: column; align-items: flex-start; gap: 4px; padding-top: 4px; }
.sm { display: flex; align-items: center; height: 48px; padding: 0 10px; border-radius: 6px; color: #fff; font-size: 21.6px; line-height: 46px; }
.sm svg { width: 24px; height: 24px; }
.sm svg.tr { width: 21px; }

.backdrop { position: absolute; inset: 0; z-index: 2; background: rgba(0,0,0,.5); }
.modal { position: absolute; z-index: 3; left: 704px; top: -60px; width: 996px; height: 1500px; background: #fff; background-clip: padding-box; box-shadow: 0 0 0 2px rgba(0,0,0,.2), 0 16px 32px rgba(0,0,0,.5); }
.modal-head { display: flex; justify-content: space-between; height: 174px; padding: 81px 33px 0 32px; border-bottom: 2px solid #e9ecef; }
h2 { margin: 0; font-size: 36px; font-weight: 400; line-height: 54px; }
.close { width: 22px; height: 22px; margin-top: 13px; }
.modal-body { padding: 32px 32px 0 32px; }
.field { height: 172px; }
.field label { display: block; height: 64px; line-height: 46px; font-weight: 700; }
.ctl { height: 76px; border: 2px solid #ced4da; border-radius: 8px; padding-left: 24px; line-height: 69px; color: #939ba2; display: flex; justify-content: space-between; }
.select { padding: 0 6px 0 32px; color: #495057; }
.select svg { width: 18px; height: 12px; margin-top: 31px; }
.modal-foot { display: flex; justify-content: flex-end; gap: 16px; padding: 32px 32px 0; border-top: 2px solid #e9ecef; }

/* right rail */
.edgebar { width: 88px; height: 1420px; display: flex; flex-direction: column; align-items: center; margin-top: -132px; padding-top: 4px; }
.copilot { width: 48px; height: 44px; }
.e1 { width: 34px; height: 34px; margin-top: 42px; }
.e2 { width: 34px; height: 34px; margin-top: 47px; }
.e3 { width: 36px; height: 28px; margin-top: 50px; }
.e4 { width: 36px; height: 36px; margin-top: 47px; }
.e5 { width: 34px; height: 36px; margin-top: 44px; }
.e6 { width: 34px; height: 34px; margin-top: 45px; }
.e7 { width: 34px; height: 26px; margin-top: 49px; }
.edgebar hr { width: 56px; height: 2px; border: 0; margin: 0; background: #bdbdbd; }
.e7 + hr { margin-top: 52px; }
.e8 { width: 24px; height: 24px; margin-top: 51px; }
.grow { flex: 1; }
.e9 { width: 34px; height: 30px; margin-bottom: 28px; }
.e10 { width: 34px; height: 36px; margin: 27px 0 18px; }

/* taskbar */
.taskbar { flex: none; height: 96px; border-top: 2px solid #b0b5c2; display: flex; align-items: center; background: linear-gradient(90deg, #e2edf7 0, #e0ecf8 22%, #d4dcf4 33%, #d5d8ef 38%, #d2e1fa 44%, #d6dcf4 50%, #d9dbee 62%, #d6dae8 70%, #e0ebf5 79%, #e5eff8 100%); padding-left: 37px; }
.weather { width: 498px; display: flex; align-items: center; gap: 16px; font-size: 23px; letter-spacing: -.5px; }
.weather svg { width: 48px; height: 42px; margin-bottom: 2px; }
.weather div { display: flex; flex-direction: column; padding-bottom: 4px; }
.weather b { font-weight: 400; color: #1b1b1b; }
.weather span { color: #5c6168; }
.start { width: 46px; height: 46px; }
.tsearch { width: 436px; height: 62px; margin-left: 29px; border-radius: 31px; background: #f2f6fd; border: 2px solid #c3cde3; display: flex; align-items: center; padding-left: 19px; font-size: 26px; color: #5b5d62; }
.tsearch svg { width: 30px; height: 30px; }
.tsearch span { margin-left: 20px; letter-spacing: -.2px; flex: 1; }
.tsearch .bear { width: 100px; height: 50px; margin: 2px 2px 0 0; }
.apps { display: flex; gap: 12px; margin-left: 12px; }
.apps i { position: relative; width: 76px; height: 76px; border-radius: 8px; display: flex; justify-content: center; padding-top: 14px; }
.apps svg { width: 48px; height: 48px; }
.apps i::after { content: ""; position: absolute; bottom: 0; left: 32px; width: 12px; height: 6px; border-radius: 3px; }
.apps .run::after { background: #7c808a; }
.apps .cur { background: #eaf0fa; box-shadow: 0 1px 2px #b7bfd0; }
.apps .cur::after { left: 22px; width: 32px; background: #0078d4; }
.apps .ava { position: absolute; left: 40px; top: 4px; width: 34px; height: 34px; }
.tray { display: flex; align-items: center; margin-left: 52px; font-size: 23.5px; letter-spacing: -.25px; }
.t1 { width: 20px; height: 12px; }
.t2 { width: 32px; height: 28px; margin-left: 39px; }
.t3 { width: 32px; height: 26px; margin-left: 32px; }
.t4 { width: 32px; height: 28px; margin-left: 16px; }
.t5 { width: 34px; height: 20px; margin-left: 16px; }
.clock { width: 156px; display: flex; flex-direction: column; align-items: flex-end; padding-bottom: 3px; }
.t6 { width: 26px; height: 32px; margin-left: 17px; }
```
